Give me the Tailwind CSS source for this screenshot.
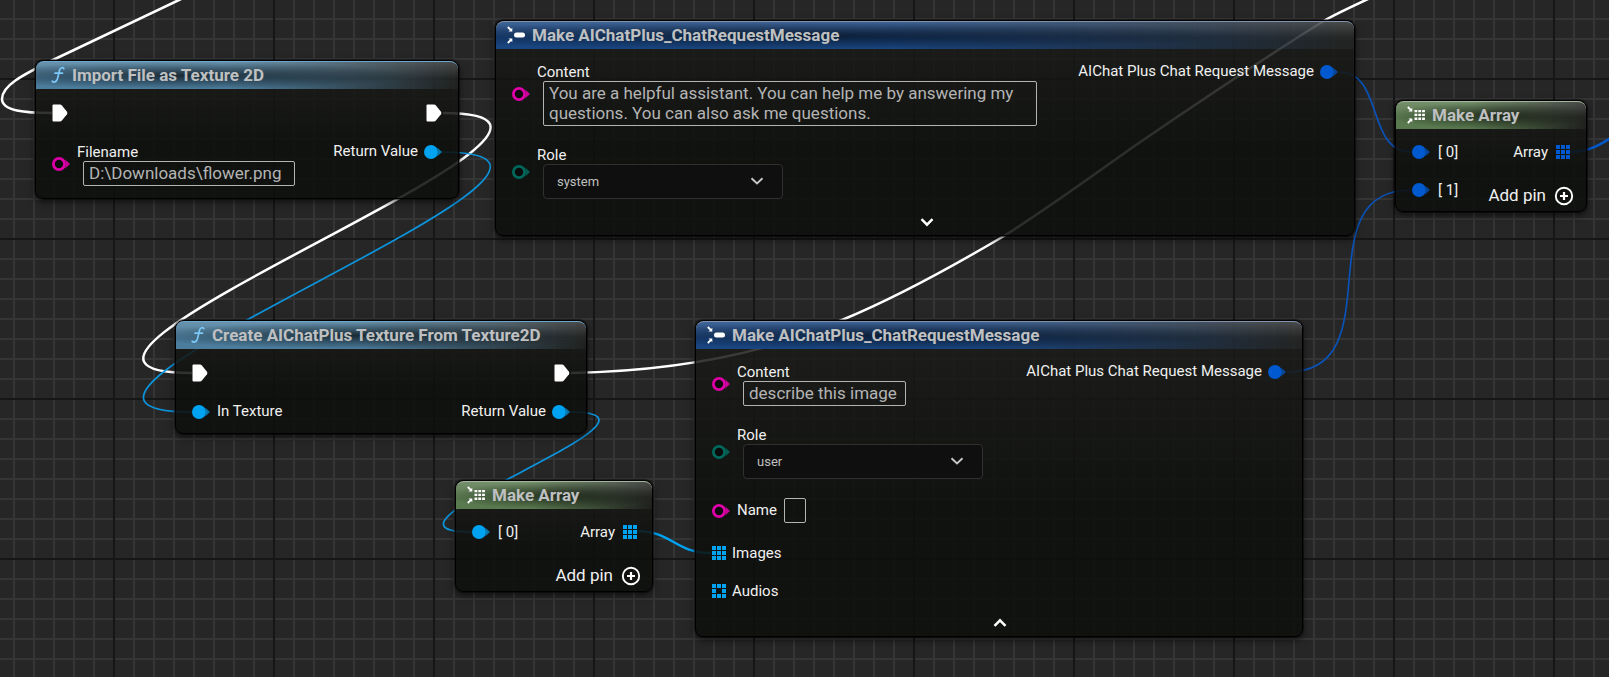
<!DOCTYPE html>
<html lang="en">
<head>
<meta charset="utf-8">
<title>Blueprint graph</title>
<script src="https://cdn.jsdelivr.net/npm/@tailwindcss/browser@4"></script>
</head>
<body class="bg-[#262626]">
<svg width="0" height="0" class="absolute" aria-hidden="true">
  <defs>
    <symbol id="exec" viewBox="0 0 16 18"><path d="M1.500 .5H8Q9.100 .5 9.900 1.400L15 7.700Q15.800 9 15 10.300L9.900 16.600Q9.100 17.500 8 17.500H1.500Q.5 17.500 .5 16.500V1.500Q.5 .5 1.500 .5Z" fill="#fff"/></symbol>
    <symbol id="pin" viewBox="0 0 18 14"><circle cx="7" cy="7" r="7" fill="currentColor"/><path d="M13.200 2.500L18 7L13.200 11.500Q15 7 13.200 2.500Z" fill="currentColor" opacity=".7"/></symbol>
    <symbol id="ring" viewBox="0 0 18 14"><circle cx="7" cy="7" r="5.600" fill="#0b0b0b" stroke="currentColor" stroke-width="2.800"/><path d="M13.200 2.500L18 7L13.200 11.500Q15 7 13.200 2.500Z" fill="currentColor" opacity=".9"/></symbol>
    <symbol id="grid" viewBox="0 0 14 14"><path d="M0 0h4v4H0zM5 0h4v4H5zM10 0h4v4h-4zM0 5h4v4H0zM5 5h4v4H5zM10 5h4v4h-4zM0 10h4v4H0zM5 10h4v4H5zM10 10h4v4h-4z" fill="currentColor"/></symbol>
    <symbol id="grid-open" viewBox="0 0 14 14"><path d="M0 0h4v4H0zM5 0h4v4H5zM10 0h4v4h-4zM0 5h4v4H0zM10 5h4v4h-4zM0 10h4v4H0zM5 10h4v4H5zM10 10h4v4h-4z" fill="currentColor"/></symbol>
    <symbol id="fn" viewBox="0 0 14 18"><path d="M12.800 2.600C12.300 1.200 9.300 1.200 8.500 4.200C7.800 7 7.200 10.500 6.300 13.300C5.400 16.300 2.200 16.700 1.200 15.200M4 7.200H11.500" fill="none" stroke="#7cc8f8" stroke-width="1.700" stroke-linecap="round"/></symbol>
    <symbol id="make" viewBox="0 0 18 18"><rect x="7" y="6.500" width="11" height="5" rx="2.500" fill="#fff"/><path d="M.8 1L4 4.200M.8 17L4 13.800" stroke="#fff" stroke-width="1.800"/><path d="M5.300 1.700V5.500H1.500ZM5.300 16.300V12.500H1.500Z" fill="#fff"/></symbol>
    <symbol id="make-array" viewBox="0 0 18 18"><path d="M7.500 4h2.800v2.300H7.500zM11.300 4h2.800v2.300h-2.800zM15.100 4h2.800v2.300h-2.800zM7.500 7.800h2.800v2.300H7.500zM11.300 7.800h2.800v2.300h-2.800zM15.100 7.800h2.800v2.300h-2.800zM7.500 11.600h2.800v2.300H7.500zM11.300 11.600h2.800v2.300h-2.800zM15.100 11.600h2.800v2.300h-2.800z" fill="#fff"/><path d="M.8 1L4 4.200M.8 17L4 13.800" stroke="#fff" stroke-width="1.800"/><path d="M5.300 1.700V5.500H1.500ZM5.300 16.300V12.500H1.500Z" fill="#fff"/></symbol>
    <symbol id="plus" viewBox="0 0 20 20"><circle cx="10" cy="10" r="8.200" fill="none" stroke="#fff" stroke-width="1.900"/><path d="M10 6V14M6 10H14" stroke="#fff" stroke-width="2.200"/></symbol>
    <symbol id="down" viewBox="0 0 14 14"><path d="M1.500 4.200L7 9.500L12.500 4.200" fill="none" stroke="currentColor" stroke-width="1.900"/></symbol>
    <symbol id="down-bold" viewBox="0 0 14 14"><path d="M1.500 4.200L7 9.700L12.500 4.200" fill="none" stroke="#fff" stroke-width="2.500"/></symbol>
    <symbol id="up" viewBox="0 0 14 14"><path d="M1.500 9.800L7 4.300L12.500 9.800" fill="none" stroke="#fff" stroke-width="2.500"/></symbol>
    <pattern id="minor" x="13" y="18" width="20" height="20" patternUnits="userSpaceOnUse"><path d="M0 0H20V2H2V20H0Z" fill="#353535"/></pattern>
    <pattern id="major" x="113" y="78" width="160" height="160" patternUnits="userSpaceOnUse"><path d="M0 0H160V2H2V160H0Z" fill="#161616"/></pattern>
  </defs>
</svg>

<main class="relative h-screen min-h-[640px] overflow-hidden bg-[#262626] font-['Roboto',sans-serif] text-[15px] text-[#f0f0f0]">
  <svg class="absolute inset-0 size-full" aria-hidden="true">
    <rect width="100%" height="100%" fill="url(#minor)"/>
    <rect width="100%" height="100%" fill="url(#major)"/>
    <g fill="none" stroke="#fff" stroke-width="2.500">
      <path d="M181 -1L55 59C20 76 2 86 2 99C2 111 25 113 52 113"/>
      <path d="M443 113C678 113 -46 373 192 373"/>
      <path d="M571 373C680 371 770 352 842 320C900 296 955 265 1004 236C1050 207 1095 174 1133 147L1177 117C1220 88 1275 51 1327 19C1340 12 1353 6 1368 -1"/>
    </g>
    <g fill="none" stroke="#0c94dc" stroke-width="1.700">
      <path d="M441 152C681 152 -46 412 192 412"/>
      <path d="M570 412C700 412 343 532 472 532"/>
      <path d="M636 531C672 531 675 553 711 553" stroke="#00a2f2" stroke-width="2.500"/>
    </g>
    <g fill="none" stroke="#0a52b8" stroke-width="1.700">
      <path d="M1339 72C1384 72 1366 152 1411 152"/>
      <path d="M1287 372C1395 372 1303 190 1411 190"/>
      <path d="M1571 152C1588 151 1597 147 1612 137" stroke="#0059cf" stroke-width="2.500"/>
    </g>
  </svg>

  <!-- Import File as Texture 2D -->
  <section class="absolute left-[35px] top-[60px] w-[424px] rounded-lg border border-black bg-linear-to-b from-[#1c1d1b]/85 to-[#0d0f0c]/87 to-60% shadow-[0_0_0_1px_rgba(0,0,0,0.4),0_3px_7px_rgba(0,0,0,0.6)]">
    <header class="flex h-7 items-center gap-[7px] rounded-t-lg border-t border-[#6fa5c8] bg-[radial-gradient(ellipse_55%_50%_at_35%_50%,#000a,#0000),linear-gradient(to_bottom,#ffffff30,#ffffff08_60%),linear-gradient(to_right,#46799a,#46799a_45%,#46799a00)] pb-[2px] pl-[15px]">
      <svg class="h-[18px] w-[14px]"><use href="#fn"/></svg>
      <h2 class="text-[17px] font-bold leading-5 text-[#bfc0c1]">Import File as Texture 2D</h2>
    </header>
    <div class="flex justify-between px-4 pb-3 pt-1">
      <div>
        <div class="flex h-[39px] items-center"><svg class="h-[18px] w-4"><use href="#exec"/></svg></div>
        <div class="mt-[10px] flex items-center gap-[7px]">
          <svg class="h-[14px] w-[18px] text-[#e000a8]"><use href="#ring"/></svg>
          <div>
            <label for="filename" class="block h-[19px] leading-5">Filename</label>
            <input id="filename" value="D:\Downloads\flower.png" class="ml-[6px] block h-[25px] w-[212px] rounded-xs border border-[#b4b4b4] bg-transparent px-[5px] text-[17px] text-[#b4b4b4]">
          </div>
        </div>
      </div>
      <div class="-ml-12">
        <div class="flex h-[39px] items-center justify-end"><svg class="h-[18px] w-4"><use href="#exec"/></svg></div>
        <div class="flex h-[39px] items-center gap-[6px]">Return Value<svg class="h-[14px] w-[18px] text-[#00a2f2]"><use href="#pin"/></svg></div>
      </div>
    </div>
  </section>

  <!-- System message -->
  <section class="absolute left-[495px] top-[20px] w-[860px] rounded-lg border border-black bg-linear-to-b from-[#1c1d1b]/85 to-[#0d0f0c]/87 to-60% shadow-[0_0_0_1px_rgba(0,0,0,0.4),0_3px_7px_rgba(0,0,0,0.6)]">
    <header class="flex h-7 items-center gap-[7px] rounded-t-lg border-t border-[#7e93ae] bg-[radial-gradient(ellipse_55%_50%_at_35%_50%,#0009,#0000),linear-gradient(to_bottom,#ffffff30,#ffffff08_60%),linear-gradient(to_right,#123f7c,#123f7c_45%,#123f7c00)] pb-[2px] pl-[11px]">
      <svg class="size-[18px]"><use href="#make"/></svg>
      <h2 class="text-[17px] font-bold leading-5 text-[#bfc0c1]">Make AIChatPlus_ChatRequestMessage</h2>
    </header>
    <div class="flex justify-between px-4 pt-[13px]">
      <div class="flex flex-col gap-[19px]">
        <div class="flex items-center gap-[7px]">
          <svg class="h-[14px] w-[18px] text-[#e000a8]"><use href="#ring"/></svg>
          <div>
            <label for="content-1" class="block h-[19px] leading-5">Content</label>
            <textarea id="content-1" rows="2" class="ml-[6px] block h-[45px] w-[494px] resize-none overflow-hidden rounded-xs border border-[#b4b4b4] bg-transparent px-[5px] pt-px text-[17px] leading-5 text-[#b4b4b4]">You are a helpful assistant. You can help me by answering my questions. You can also ask me questions.</textarea>
          </div>
        </div>
        <div class="flex items-center gap-[7px]">
          <svg class="h-[14px] w-[18px] text-[#00685a]"><use href="#ring"/></svg>
          <div>
            <label for="role-1" class="block h-[19px] leading-5">Role</label>
            <div class="relative ml-[6px]">
              <select id="role-1" class="block h-[35px] w-60 appearance-none rounded-sm border border-[#303030] bg-[#0f0f0f] px-[13px] text-[13px] text-[#c0c0c0]"><option>system</option></select>
              <svg class="pointer-events-none absolute right-[19px] top-[10px] size-[14px] text-[#c8c8c8]"><use href="#down"/></svg>
            </div>
          </div>
        </div>
      </div>
      <div class="flex h-[19px] items-center gap-[6px]">AIChat Plus Chat Request Message<svg class="h-[14px] w-[18px] text-[#0059cf]"><use href="#pin"/></svg></div>
    </div>
    <div class="flex justify-center pb-[6px] pl-1 pt-4"><button aria-label="Show advanced pins" class="size-[14px]"><svg class="size-[14px]"><use href="#down-bold"/></svg></button></div>
  </section>

  <!-- Make Array (messages) -->
  <section class="absolute left-[1395px] top-[100px] w-[192px] rounded-lg border border-black bg-linear-to-b from-[#1c1d1b]/85 to-[#0d0f0c]/87 to-60% shadow-[0_0_0_1px_rgba(0,0,0,0.4),0_3px_7px_rgba(0,0,0,0.6)]">
    <header class="flex h-7 items-center gap-[7px] rounded-t-lg border-t border-[#a3b59c] bg-[radial-gradient(ellipse_55%_50%_at_50%_50%,#0009,#0000),linear-gradient(to_bottom,#ffffff30,#ffffff08_60%),linear-gradient(to_right,#547549,#547549_40%,#54754900)] pb-[2px] pl-[11px]">
      <svg class="size-[18px]"><use href="#make-array"/></svg>
      <h2 class="text-[17px] font-bold leading-5 text-[#bfc0c1]">Make Array</h2>
    </header>
    <div class="flex justify-between pb-[2px] pl-4 pr-3 pt-1">
      <div>
        <div class="flex h-[38px] items-center gap-2"><svg class="h-[14px] w-[18px] text-[#0059cf]"><use href="#pin"/></svg>[ 0]</div>
        <div class="flex h-[38px] items-center gap-2"><svg class="h-[14px] w-[18px] text-[#0059cf]"><use href="#pin"/></svg>[ 1]</div>
      </div>
      <div class="flex flex-col items-end">
        <div class="mr-1 flex h-[38px] items-center gap-2">Array<svg class="size-[14px] text-[#0059cf]"><use href="#grid"/></svg></div>
        <button class="mt-[13px] flex h-6 items-center gap-2 text-[17px]">Add pin<svg class="size-5"><use href="#plus"/></svg></button>
      </div>
    </div>
  </section>

  <!-- Create AIChatPlus Texture -->
  <section class="absolute left-[175px] top-[320px] w-[412px] rounded-lg border border-black bg-linear-to-b from-[#1c1d1b]/85 to-[#0d0f0c]/87 to-60% shadow-[0_0_0_1px_rgba(0,0,0,0.4),0_3px_7px_rgba(0,0,0,0.6)]">
    <header class="flex h-7 items-center gap-[7px] rounded-t-lg border-t border-[#6fa5c8] bg-[radial-gradient(ellipse_55%_50%_at_45%_50%,#000a,#0000),linear-gradient(to_bottom,#ffffff30,#ffffff08_60%),linear-gradient(to_right,#46799a,#46799a_45%,#46799a00)] pb-[2px] pl-[15px]">
      <svg class="h-[18px] w-[14px]"><use href="#fn"/></svg>
      <h2 class="text-[17px] font-bold leading-5 text-[#bfc0c1]">Create AIChatPlus Texture From Texture2D</h2>
    </header>
    <div class="flex justify-between px-4 pb-[2px] pt-1">
      <div>
        <div class="flex h-[39px] items-center"><svg class="h-[18px] w-4"><use href="#exec"/></svg></div>
        <div class="flex h-[39px] items-center gap-[7px]"><svg class="h-[14px] w-[18px] text-[#00a2f2]"><use href="#pin"/></svg>In Texture</div>
      </div>
      <div>
        <div class="flex h-[39px] items-center justify-end"><svg class="h-[18px] w-4"><use href="#exec"/></svg></div>
        <div class="flex h-[39px] items-center gap-[6px]">Return Value<svg class="h-[14px] w-[18px] text-[#00a2f2]"><use href="#pin"/></svg></div>
      </div>
    </div>
  </section>

  <!-- Make Array (images) -->
  <section class="absolute left-[455px] top-[480px] w-[198px] rounded-lg border border-black bg-linear-to-b from-[#1c1d1b]/85 to-[#0d0f0c]/87 to-60% shadow-[0_0_0_1px_rgba(0,0,0,0.4),0_3px_7px_rgba(0,0,0,0.6)]">
    <header class="flex h-7 items-center gap-[7px] rounded-t-lg border-t border-[#a3b59c] bg-[radial-gradient(ellipse_55%_50%_at_50%_50%,#0009,#0000),linear-gradient(to_bottom,#ffffff30,#ffffff08_60%),linear-gradient(to_right,#547549,#547549_40%,#54754900)] pb-[2px] pl-[11px]">
      <svg class="size-[18px]"><use href="#make-array"/></svg>
      <h2 class="text-[17px] font-bold leading-5 text-[#bfc0c1]">Make Array</h2>
    </header>
    <div class="flex justify-between pb-[2px] pl-4 pr-[11px] pt-1">
      <div class="flex h-[38px] items-center gap-2"><svg class="h-[14px] w-[18px] text-[#00a2f2]"><use href="#pin"/></svg>[ 0]</div>
      <div class="flex flex-col items-end">
        <div class="mr-1 flex h-[38px] items-center gap-2">Array<svg class="size-[14px] text-[#00a2f2]"><use href="#grid"/></svg></div>
        <button class="mb-px mt-[13px] flex h-6 items-center gap-2 text-[17px]">Add pin<svg class="size-5"><use href="#plus"/></svg></button>
      </div>
    </div>
  </section>

  <!-- User message -->
  <section class="absolute left-[695px] top-[320px] w-[608px] rounded-lg border border-black bg-linear-to-b from-[#1c1d1b]/85 to-[#0d0f0c]/87 to-60% shadow-[0_0_0_1px_rgba(0,0,0,0.4),0_3px_7px_rgba(0,0,0,0.6)]">
    <header class="flex h-7 items-center gap-[7px] rounded-t-lg border-t border-[#7e93ae] bg-[radial-gradient(ellipse_55%_50%_at_35%_50%,#0009,#0000),linear-gradient(to_bottom,#ffffff30,#ffffff08_60%),linear-gradient(to_right,#123f7c,#123f7c_45%,#123f7c00)] pb-[2px] pl-[11px]">
      <svg class="size-[18px]"><use href="#make"/></svg>
      <h2 class="text-[17px] font-bold leading-5 text-[#bfc0c1]">Make AIChatPlus_ChatRequestMessage</h2>
    </header>
    <div class="flex justify-between px-4 pt-[13px]">
      <div>
        <div class="flex flex-col gap-[19px]">
          <div class="flex items-center gap-[7px]">
            <svg class="h-[14px] w-[18px] text-[#e000a8]"><use href="#ring"/></svg>
            <div>
              <label for="content-2" class="block h-[19px] leading-5">Content</label>
              <input id="content-2" value="describe this image" class="ml-[6px] block h-[25px] w-[163px] rounded-xs border border-[#b4b4b4] bg-transparent px-[5px] text-[17px] text-[#b4b4b4]">
            </div>
          </div>
          <div class="flex items-center gap-[7px]">
            <svg class="h-[14px] w-[18px] text-[#00685a]"><use href="#ring"/></svg>
            <div>
              <label for="role-2" class="block h-[19px] leading-5">Role</label>
              <div class="relative ml-[6px]">
                <select id="role-2" class="block h-[35px] w-60 appearance-none rounded-sm border border-[#303030] bg-[#0f0f0f] px-[13px] text-[13px] text-[#c0c0c0]"><option>user</option></select>
                <svg class="pointer-events-none absolute right-[19px] top-[10px] size-[14px] text-[#c8c8c8]"><use href="#down"/></svg>
              </div>
            </div>
          </div>
          <div class="flex items-center gap-[7px]">
            <svg class="h-[14px] w-[18px] text-[#e000a8]"><use href="#ring"/></svg>
            <label for="name">Name</label>
            <input id="name" class="block h-[25px] w-[22px] rounded-xs border border-[#b4b4b4] bg-transparent px-[5px] text-[17px] text-[#b4b4b4]">
          </div>
        </div>
        <div class="mt-[11px] flex h-[38px] items-center gap-[6px]"><svg class="size-[14px] text-[#00a2f2]"><use href="#grid"/></svg>Images</div>
        <div class="flex h-[38px] items-center gap-[6px]"><svg class="size-[14px] text-[#00a2f2]"><use href="#grid-open"/></svg>Audios</div>
      </div>
      <div class="flex h-[19px] items-center gap-[6px]">AIChat Plus Chat Request Message<svg class="h-[14px] w-[18px] text-[#0059cf]"><use href="#pin"/></svg></div>
    </div>
    <div class="flex justify-center pb-[6px] pl-[2px] pt-[6px]"><button aria-label="Hide advanced pins" class="size-[14px]"><svg class="size-[14px]"><use href="#up"/></svg></button></div>
  </section>
</main>
</body>
</html>
